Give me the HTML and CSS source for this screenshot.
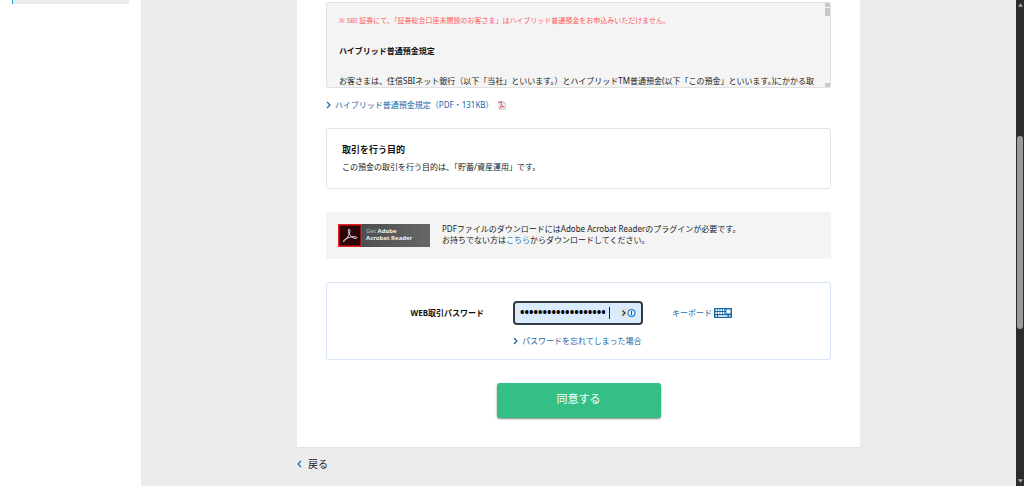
FILE: index.html
```html
<!DOCTYPE html>
<html lang="ja">
<head>
<meta charset="utf-8">
<title>ハイブリッド普通預金規定</title>
<link rel="stylesheet" href="styles.css">
</head>
<body>
<div class="page">
  <aside class="sidebar"><div class="sidebar-item"></div></aside>
  <main class="main">
    <div class="column">
      <form class="card">
        <section class="terms">
          <div class="terms-text">
            <p class="notice">※ SBI 証券にて、「証券総合口座未開設のお客さま」はハイブリッド普通預金をお申込みいただけません。</p>
            <h2 class="terms-title">ハイブリッド普通預金規定</h2>
            <p class="terms-body">お客さまは、住信SBIネット銀行（以下「当社」といいます。）とハイブリッドTM普通預金(以下「この預金」といいます。)にかかる取</p>
          </div>
          <div class="terms-rail"><span class="rail-up"></span><span class="rail-thumb"></span><span class="rail-down"></span></div>
        </section>
        <a class="link pdf-link" href="#">
          <svg class="chevron" viewBox="0 0 5 8"><path d="M1 1l3 3-3 3"/></svg>
          <span>ハイブリッド普通預金規定（PDF・131KB）</span>
          <svg class="pdf-icon" viewBox="0 0 16 18"><path d="M2 1h9l4 4v12H2z" fill="#f2f2f2" stroke="#b5b5b5"/><path d="M11 1v4h4" fill="none" stroke="#b5b5b5"/><path d="M1 2.500h7" stroke="#e66" stroke-width="3"/><path d="M6 5c3-1 1 5-3 10 2-3 6-4 10-3-4 0-6-3-7-7z" fill="none" stroke="#e44" stroke-width="1.500"/></svg>
        </a>
        <section class="purpose">
          <h3 class="purpose-title">取引を行う目的</h3>
          <p class="purpose-text">この預金の取引を行う目的は、「貯蓄/資産運用」です。</p>
        </section>
        <section class="reader">
          <a class="badge" href="#">
            <svg class="badge-logo" viewBox="0 0 24 23"><rect x=".75" y=".75" width="22.500" height="21.500" fill="#2b0508" stroke="#e8201f" stroke-width="1.500"/><path d="M5.500 17.500C8 16.500 12 10 12 6.500c0-1.700-1.700-1.700-1.700 0 0 3.500 3.700 8 7.200 8 1.800 0 1.800-1.700 0-1.700-3.500-.8-8 .9-10.700 2.700-1 .8-2 2-1.300 2z" fill="none" stroke="#eee" stroke-width=".9"/></svg>
            <span class="badge-text"><span class="badge-get">Get</span> Adobe<br>Acrobat Reader</span>
          </a>
          <p class="reader-text">PDFファイルのダウンロードにはAdobe Acrobat Readerのプラグインが必要です。<br>お持ちでない方は<a class="inline-link" href="#">こちら</a>からダウンロードしてください。</p>
        </section>
        <section class="password">
          <label class="password-label" for="pw">WEB取引パスワード</label>
          <div class="field">
            <input class="field-input" id="pw" type="password" value="1234567890123456789">
            <span class="caret"></span>
            <button class="manager" type="button" aria-label="保存したパスワード">
              <svg class="manager-icon" viewBox="0 0 17 10"><rect width="17" height="10" rx="5" fill="#e4e4e2"/><path d="M3.500 2.500L6 5 3.500 7.500" fill="none" stroke="#333" stroke-width="1.300"/><circle cx="12.500" cy="5" r="3.400" fill="#fff" stroke="#1c86e0" stroke-width="1.200"/><path d="M12.500 3v4" stroke="#1c4e80" stroke-width="1.200"/></svg>
            </button>
          </div>
          <a class="link keyboard" href="#">
            <span>キーボード</span>
            <svg class="keyboard-icon" viewBox="0 0 18 10"><rect width="18" height="10" rx=".5" fill="#1668a8"/><path d="M1.500 2.200h10M1.500 5h10" stroke="#fff" stroke-width="1.800" stroke-dasharray="1.700 .7"/><path d="M12.500 1.500h4v4h-4z" fill="#fff"/><path d="M1.500 8H3M4 8h9.500M15 8h1.500" stroke="#fff" stroke-width="1.500"/></svg>
          </a>
          <a class="link forgot" href="#">
            <svg class="chevron" viewBox="0 0 5 8"><path d="M1 1l3 3-3 3"/></svg>
            <span>パスワードを忘れてしまった場合</span>
          </a>
        </section>
        <button class="agree" type="submit">同意する</button>
      </form>
      <a class="back" href="#">
        <svg class="chevron" viewBox="0 0 5 8"><path d="M4 1L1 4l3 3"/></svg>
        <span>戻る</span>
      </a>
    </div>
  </main>
  <div class="scrollbar">
    <svg class="arrow" viewBox="0 0 6 4"><path d="M3 0l3 4H0z"/></svg>
    <div class="track"><div class="thumb"></div></div>
    <svg class="arrow" viewBox="0 0 6 4"><path d="M0 0h6L3 4z"/></svg>
  </div>
</div>
</body>
</html>
```
FILE: styles.css
```css
* { box-sizing: border-box; }
body {
  margin: 0;
  font: 8px/12px "Noto Sans", "Noto Sans CJK JP", sans-serif;
  color: #222;
  background: #ececec;
}
h2, h3, p { margin: 0; }
a { text-decoration: none; }
svg { display: block; flex: none; }
input, button { font: inherit; border: 0; padding: 0; }

.page { display: flex; min-height: 100vh; }
.sidebar { flex: 0 0 141px; padding: 0 12px; background: #fff; }
.sidebar-item { height: 4px; background: #ececec; border-left: 1px solid #1fa0dc; }
.main { flex: 1; display: flex; justify-content: center; }
.column { flex: 0 1 563px; }
.card {
  display: flex;
  flex-direction: column;
  padding: 2px 29px 29px;
  background: #fff;
  border-bottom: 1px solid #e2e2e2;
  border-radius: 0 0 2px 2px;
}

.terms {
  display: flex;
  height: 86px;
  overflow: hidden;
  background: #f4f4f4;
  border: 1px solid #e0e0e0;
  border-radius: 2px;
}
.terms-text { flex: 1; min-width: 0; overflow: hidden; padding: 12px 0 0 12px; white-space: nowrap; }
.notice { font-size: 7px; color: #ff5a5f; }
.terms-title { margin: 18px 0; font-size: 8px; color: #111; }
.terms-rail { display: flex; flex-direction: column; gap: 1px; width: 5px; }
.rail-up { height: 4px; background: #c9c9c9; }
.rail-thumb { height: 8px; background: #c9c9c9; }
.rail-down { height: 4px; margin-top: auto; background: #c9c9c9; }

.link { display: flex; align-items: center; color: #1668a8; }
.chevron { width: 5px; height: 8px; fill: none; stroke: #1668a8; stroke-width: 1.2; }
.pdf-link { gap: 4px; align-self: flex-start; margin-top: 11px; }
.pdf-icon { width: 8px; height: 9px; }

.purpose {
  margin-top: 17px;
  padding: 14px 15px 15px;
  border: 1px solid #e4e4e4;
  border-radius: 3px;
}
.purpose-title { margin-bottom: 5px; font-size: 9px; line-height: 13px; color: #111; }

.reader {
  display: flex;
  align-items: center;
  gap: 12px;
  margin-top: 23px;
  padding: 11px 12px;
  background: #f4f4f4;
}
.badge {
  display: flex;
  gap: 4px;
  width: 92px;
  background: linear-gradient(100deg, #454545, #686868);
}
.badge-logo { width: 24px; height: 23px; }
.badge-text { padding-top: 4px; font-size: 6px; font-weight: 700; line-height: 7px; color: #eee; white-space: nowrap; }
.badge-get { font-weight: 400; color: #bbb; }
.reader-text { padding-bottom: 3px; line-height: 11px; }
.inline-link { color: #1a7cc8; }

.password {
  display: grid;
  grid-template-columns: 157px 130px 1fr;
  align-items: center;
  column-gap: 29px;
  row-gap: 10px;
  margin-top: 23px;
  padding: 18px 0 12px;
  border: 1px solid #d6e4f6;
  border-radius: 3px;
}
.password-label { text-align: right; font-weight: 700; color: #111; }
.field {
  display: flex;
  align-items: center;
  height: 24px;
  padding: 0 5px;
  background: #d9ebfd;
  border: 2px solid #333b44;
  border-radius: 4px;
}
.field-input {
  width: 89px;
  height: 16px;
  font: bold 12px/16px "Noto Sans", sans-serif;
  color: #000;
  background: transparent;
  outline: 0;
}
.caret { width: 1px; height: 12px; background: #222; }
.manager { margin-left: auto; background: none; }
.manager-icon { width: 17px; height: 10px; }
.keyboard { gap: 2px; justify-self: start; }
.keyboard-icon { width: 18px; height: 10px; }
.forgot { grid-column: 2 / 4; gap: 4px; }

.agree {
  align-self: center;
  width: 164px;
  margin-top: 23px;
  padding: 8px 0 12px;
  font-size: 11px;
  line-height: 15px;
  color: #fff;
  background: #33bf85;
  border-radius: 3px;
  box-shadow: 0 1px 2px #888;
}
.back {
  display: inline-flex;
  align-items: center;
  gap: 6px;
  margin-top: 8px;
  font-size: 10px;
  line-height: 16px;
  color: #222;
}

.scrollbar {
  flex: 0 0 8px;
  display: flex;
  flex-direction: column;
  align-items: center;
  padding: 3px 0;
  background: #2c2c2c;
}
.arrow { width: 5px; height: 4px; fill: #aaa; }
.track { flex: 1; display: grid; grid-template-rows: 129fr 193fr 150fr; }
.thumb { grid-row: 2; width: 6px; background: #9b9999; border-radius: 3px; }
```
